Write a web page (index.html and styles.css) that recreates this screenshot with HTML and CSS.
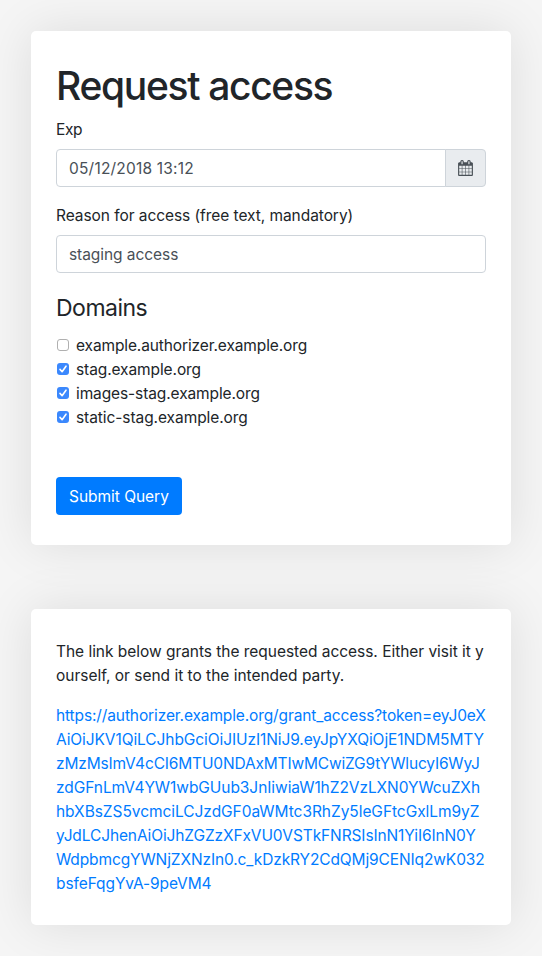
FILE: index.html
```html
<!DOCTYPE html>
<html lang="en">
<head>
<meta charset="utf-8">
<title>Request access</title>
<link rel="stylesheet" href="styles.css">
</head>
<body>
<main class="page">
  <form class="card request">
    <h1>Request access</h1>
    <label class="label exp">Exp</label>
    <div class="input-group">
      <div class="control date">05/12/2018 13:12</div>
      <div class="addon">
        <svg class="calendar" viewBox="0 0 1664 1792"><path fill="currentColor" d="M128 1664h288v-288H128v288zm352 0h320v-288H480v288zm-352-352h288V992H128v320zm352 0h320V992H480v320zM128 928h288V640H128v288zm736 736h320v-288H864v288zM480 928h320V640H480v288zm768 736h288v-288h-288v288zm-384-352h320V992H864v320zM512 448V160q0-13-9.500-22.500T480 128h-64q-13 0-22.500 9.500T384 160v288q0 13 9.500 22.500T416 480h64q13 0 22.500-9.500T512 448zm736 864h288V992h-288v320zM864 928h320V640H864v288zm384 0h288V640h-288v288zm32-480V160q0-13-9.500-22.500T1248 128h-64q-13 0-22.500 9.500T1152 160v288q0 13 9.500 22.500t22.500 9.500h64q13 0 22.500-9.500t9.500-22.500zm384-64v1280q0 52-38 90t-90 38H128q-52 0-90-38t-38-90V384q0-52 38-90t90-38h128v-96q0-66 47-113T416 0h64q66 0 113 47t47 113v96h384v-96q0-66 47-113t113-47h64q66 0 113 47t47 113v96h128q52 0 90 38t38 90z"/></svg>
      </div>
    </div>
    <label class="label reason">Reason for access (free text, mandatory)</label>
    <div class="control staging">staging access</div>
    <h2>Domains</h2>
    <div class="check d1"><i class="box"></i>example.authorizer.example.org</div>
    <div class="check d2"><i class="box on"><svg viewBox="0 0 12 12"><path d="M3 6.400 5.100 8.700 9 3.200"/></svg></i>stag.example.org</div>
    <div class="check d3"><i class="box on"><svg viewBox="0 0 12 12"><path d="M3 6.400 5.100 8.700 9 3.200"/></svg></i>images-stag.example.org</div>
    <div class="check d4"><i class="box on"><svg viewBox="0 0 12 12"><path d="M3 6.400 5.100 8.700 9 3.200"/></svg></i>static-stag.example.org</div>
    <button type="button" class="submit">Submit Query</button>
  </form>
  <section class="card result">
    <p><span class="line p1">The link below grants the requested access. Either visit it y</span><span class="line p2">ourself, or send it to the intended party.</span></p>
    <a class="link"><span class="line l1">https://authorizer.example.org/grant_access?token=eyJ0eX</span><span class="line l2">AiOiJKV1QiLCJhbGciOiJIUzI1NiJ9.eyJpYXQiOjE1NDM5MTY</span><span class="line l3">zMzMsImV4cCI6MTU0NDAxMTIwMCwiZG9tYWlucyI6WyJ</span><span class="line l4">zdGFnLmV4YW1wbGUub3JnIiwiaW1hZ2VzLXN0YWcuZXh</span><span class="line l5">hbXBsZS5vcmciLCJzdGF0aWMtc3RhZy5leGFtcGxlLm9yZ</span><span class="line l6">yJdLCJhenAiOiJhZGZzXFxVU0VSTkFNRSIsInN1YiI6InN0Y</span><span class="line l7">WdpbmcgYWNjZXNzIn0.c_kDzkRY2CdQMj9CENIq2wK032</span><span class="line l8">bsfeFqgYvA-9peVM4</span></a>
  </section>
</main>
</body>
</html>
```
FILE: styles.css
```css
* { box-sizing: border-box; }
body {
  margin: 0;
  background: #f5f5f5;
  color: #212529;
  font: 400 15.5px/24px Inter, "Liberation Sans", sans-serif;
  letter-spacing: -0.2px;
}
.page {
  display: flex;
  flex-direction: column;
  gap: 64px;
  padding: 31px;
  height: 956px;
  overflow: hidden;
}
.card {
  padding: 31px 25px;
  background: #fff;
  border-radius: 5px;
  box-shadow: 0 0 50px rgba(0, 0, 0, .1);
}
.request { height: 514px; }
.result { height: 316px; }
h1 {
  margin: 0 0 8px;
  font-size: 39px;
  line-height: 48px;
  font-weight: 500;
  letter-spacing: -1.33px;
}
h2 {
  margin: 21px 0 11px;
  font-size: 23px;
  line-height: 29px;
  font-weight: 400;
  letter-spacing: -0.5px;
}
.label { display: block; margin-bottom: 7px; }
.input-group { display: flex; margin-bottom: 17px; }
.control {
  flex: 1;
  height: 38px;
  padding: 7px 12px 5px;
  border: 1px solid #ced4da;
  border-radius: 4px;
  color: #495057;
}
.input-group .control { border-radius: 4px 0 0 4px; }
.addon {
  display: flex;
  align-items: center;
  justify-content: center;
  width: 41px;
  margin-left: -1px;
  border: 1px solid #ced4da;
  border-radius: 0 4px 4px 0;
  background: #e9ecef;
  color: #495057;
}
.calendar { width: 15px; height: 16px; }
.check { display: flex; align-items: center; height: 24px; }
.box {
  width: 12px;
  height: 12px;
  margin: 0 7px 2px 1px;
  border: 1px solid #b0b0b0;
  border-radius: 3px;
  background: #fff;
}
.box.on { border: 0; background: #3b88fd; }
.box svg {
  display: block;
  fill: none;
  stroke: #fff;
  stroke-width: 1.6;
  stroke-linecap: round;
  stroke-linejoin: round;
}
.submit {
  display: block;
  width: 126px;
  height: 38px;
  margin-top: 47px;
  padding: 2px 0 0 13px;
  border: 0;
  border-radius: 4px;
  background: #007bff;
  color: #fff;
  font: inherit;
  letter-spacing: -0.03px;
  text-align: left;
}
p { margin: 0 0 16px; }
.line { display: block; width: max-content; white-space: nowrap; }
.link { color: #007bff; }

/* Tracking per text run */
.exp { letter-spacing: -0.4px; }
.date { letter-spacing: 0.2px; }
.reason { letter-spacing: -0.06px; }
.staging { letter-spacing: -0.06px; }
.d1 { letter-spacing: -0.12px; }
.d2 { letter-spacing: -0.1px; }
.d3 { letter-spacing: -0.11px; }
.d4 { letter-spacing: -0.07px; }
.p1 { letter-spacing: -0.035px; }
.p2 { letter-spacing: -0.015px; }
.l1 { letter-spacing: -0.12px; }
.l2 { letter-spacing: -0.09px; }
.l3 { letter-spacing: -0.165px; }
.l4 { letter-spacing: -0.065px; }
.l5 { letter-spacing: -0.05px; }
.l6 { letter-spacing: -0.115px; }
.l7 { letter-spacing: -0.12px; }
.l8 { letter-spacing: -0.09px; }
```
